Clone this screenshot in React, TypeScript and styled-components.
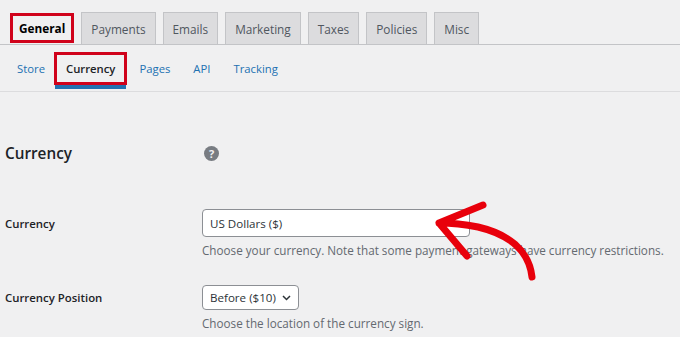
import styled, { createGlobalStyle } from 'styled-components'

const GlobalStyle = createGlobalStyle`
  html, body {
    margin: 0;
    padding: 0;
    background: #f0f0f1;
    font-family: "Open Sans", "Noto Sans", sans-serif;
    color: #1d2327;
  }
`

const Page = styled.div`
  position: relative;
  width: 680px;
  height: 337px;
  overflow: hidden;
  background: #f0f0f1;
`

const TabBar = styled.nav`
  display: flex;
  align-items: flex-end;
  gap: 7px;
  padding: 12px 0 0 10px;
  height: 32px;
  border-bottom: 1px solid #c3c4c7;
`

const Tab = styled.div<{ $active?: boolean }>`
  box-sizing: border-box;
  padding: 0 ${({ $active }) => ($active ? '6px' : '9px')};
  display: flex;
  align-items: center;
  font-size: 11.8px;
  font-weight: ${({ $active }) => ($active ? 700 : 500)};
  color: ${({ $active }) => ($active ? '#000' : '#50575e')};
  background: ${({ $active }) => ($active ? '#f0f0f1' : '#dcdcde')};
  border: ${({ $active }) => ($active ? '3px solid #d0021b' : '1px solid #c3c4c7')};
  border-bottom: ${({ $active }) => ($active ? '3px solid #d0021b' : 'none')};
  margin-bottom: ${({ $active }) => ($active ? '1px' : '0')};
  height: ${({ $active }) => ($active ? '30px' : '32px')};
`

const SubNav = styled.nav`
  display: flex;
  align-items: flex-start;
  height: 47px;
  padding: 7px 0 0 17px;
  box-sizing: border-box;
  border-bottom: 1px solid #dcdcde;
`

const SubLink = styled.div<{ $active?: boolean }>`
  box-sizing: border-box;
  height: 33px;
  display: flex;
  align-items: center;
  font-size: 11.3px;
  color: ${({ $active }) => ($active ? '#1d2327' : '#2271b1')};
  font-weight: ${({ $active }) => ($active ? 600 : 400)};
  padding: ${({ $active }) => ($active ? '0 9px' : '0')};
  margin: ${({ $active }) => ($active ? '0 12px 0 -14px' : '0 23px 0 0')};
  border: ${({ $active }) => ($active ? '3px solid #d0021b' : 'none')};
  position: relative;

  &::after {
    content: '';
    display: ${({ $active }) => ($active ? 'block' : 'none')};
    position: absolute;
    left: -2px;
    right: -2px;
    bottom: -7px;
    height: 4px;
    background: #2271b1;
  }
`

const Content = styled.main`
  padding: 49px 0 0 5px;
`

const SectionHead = styled.div`
  display: grid;
  grid-template-columns: 199px 1fr;
  align-items: center;
  height: 24px;
`

const SectionTitle = styled.h2`
  margin: 0;
  font-size: 15.3px;
  font-weight: 600;
  color: #1d2327;
`

const HelpIcon = styled.span`
  width: 15px;
  height: 15px;
  border-radius: 50%;
  background: #787c82;
  color: #f0f0f1;
  font-size: 11px;
  font-weight: 700;
  display: flex;
  align-items: center;
  justify-content: center;
  line-height: 1;
`

const Row = styled.div<{ $top: number }>`
  display: grid;
  grid-template-columns: 197px 1fr;
  margin-top: ${({ $top }) => $top}px;
`

const Label = styled.label<{ $h: number }>`
  font-size: 11.4px;
  font-weight: 600;
  color: #1d2327;
  height: ${({ $h }) => $h}px;
  display: flex;
  align-items: center;
`

const Field = styled.div`
  display: flex;
  flex-direction: column;
  align-items: flex-start;
`

const Input = styled.div<{ $w: number; $h: number }>`
  box-sizing: border-box;
  width: ${({ $w }) => $w}px;
  height: ${({ $h }) => $h}px;
  background: #fff;
  border: 1px solid #8c8f94;
  border-radius: 4px;
  padding: 0 7px;
  display: flex;
  align-items: center;
  justify-content: space-between;
  white-space: nowrap;
  font-size: 11.6px;
  color: #2c3338;
`

const Desc = styled.p`
  margin: 5px 0 0;
  font-size: 11.7px;
  color: #646970;
  white-space: nowrap;
`

const Arrow = styled.svg`
  position: absolute;
  left: 0;
  top: 0;
  pointer-events: none;
`

export default function App() {
  const tabs = ['General', 'Payments', 'Emails', 'Marketing', 'Taxes', 'Policies', 'Misc']
  const subs = ['Store', 'Currency', 'Pages', 'API', 'Tracking']
  return (
    <Page>
      <GlobalStyle />
      <TabBar>
        {tabs.map(t => (
          <Tab key={t} $active={t === 'General'}>{t}</Tab>
        ))}
      </TabBar>
      <SubNav>
        {subs.map(s => (
          <SubLink key={s} $active={s === 'Currency'}>{s}</SubLink>
        ))}
      </SubNav>
      <Content>
        <SectionHead>
          <SectionTitle>Currency</SectionTitle>
          <HelpIcon>?</HelpIcon>
        </SectionHead>
        <Row $top={44}>
          <Label $h={28}>Currency</Label>
          <Field>
            <Input $w={268} $h={28}>US Dollars ($)</Input>
            <Desc>Choose your currency. Note that some payment gateways have currency restrictions.</Desc>
          </Field>
        </Row>
        <Row $top={27}>
          <Label $h={25}>Currency Position</Label>
          <Field>
            <Input $w={97} $h={25}>
              Before ($10)
              <svg width="9" height="6" viewBox="0 0 9 6">
                <path d="M1 1l3.5 3.5L8 1" fill="none" stroke="#2c3338" strokeWidth="1.5" />
              </svg>
            </Input>
            <Desc>Choose the location of the currency sign.</Desc>
          </Field>
        </Row>
      </Content>
      <Arrow width="680" height="337" viewBox="0 0 680 337">
        <path
          d="M532 277 C529 250 508 234 478 227 C463 224 450 223 439 223 M483 205 L439 223 L467 256"
          fill="none"
          stroke="#e8000b"
          strokeWidth="7"
          strokeLinecap="round"
          strokeLinejoin="round"
        />
      </Arrow>
    </Page>
  )
}
